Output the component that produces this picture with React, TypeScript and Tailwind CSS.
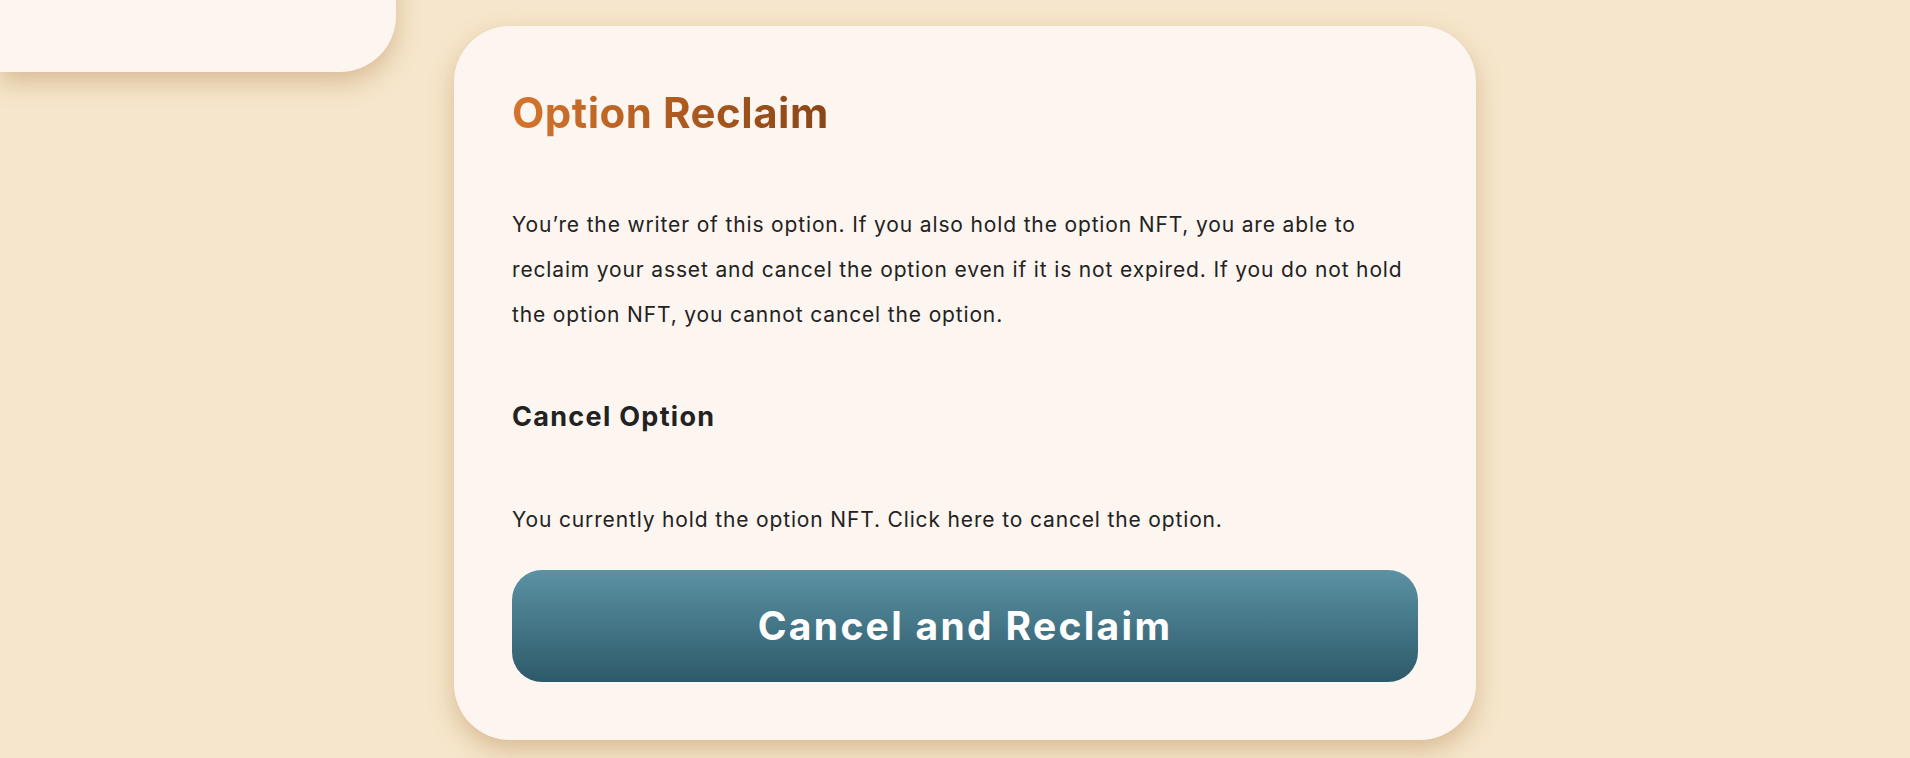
export default function App() {
  return (
    <div className="min-h-[758px] w-full overflow-hidden bg-[#f6e6cb] font-['Inter',sans-serif] text-[#222222]">
      <div className="flex items-start">
        <div className="-mt-[128px] h-[200px] w-[396px] shrink-0 rounded-br-[56px] bg-[#fcf5f0] shadow-[0_10px_24px_rgba(160,110,50,0.35)]" />
        <div className="ml-[58px] mt-[26px] flex w-[1022px] shrink-0 flex-col rounded-[56px] bg-[#fcf5f0] px-[58px] pb-[58px] pt-[63px] shadow-[0_10px_24px_rgba(160,110,50,0.35)]">
          <h1 className="self-start bg-gradient-to-r from-[#d6742c] to-[#8a4516] bg-clip-text text-[42px] font-bold leading-[48px] tracking-[0.5px] text-transparent">
            Option Reclaim
          </h1>
          <p className="mt-[65px] text-[21px] leading-[45px] tracking-[0.85px]">
            You’re the writer of this option. If you also hold the option NFT, you are able to
            <br />
            reclaim your asset and cancel the option even if it is not expired. If you do not hold
            <br />
            the option NFT, you cannot cancel the option.
          </p>
          <h2 className="mt-[64px] text-[27px] font-bold leading-[32px] tracking-[1.3px]">Cancel Option</h2>
          <p className="mt-[73px] text-[21px] leading-[28px] tracking-[0.85px]">
            You currently hold the option NFT. Click here to cancel the option.
          </p>
          <button className="mt-[36px] h-[112px] w-full rounded-[30px] bg-gradient-to-b from-[#5b92a4] to-[#2d5a6a] text-[39px] font-bold tracking-[2.3px] text-white">
            Cancel and Reclaim
          </button>
        </div>
      </div>
    </div>
  );
}
